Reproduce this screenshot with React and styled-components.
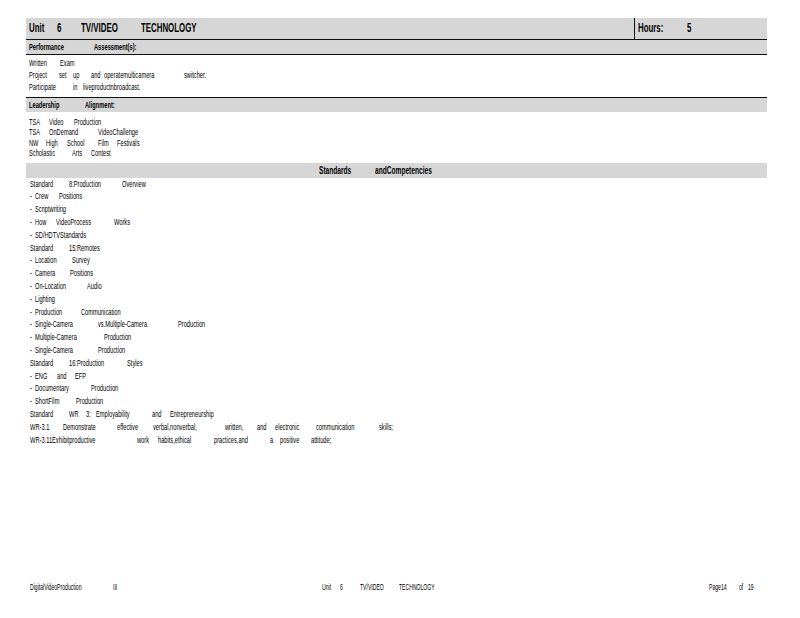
import React from "react";
import styled, { createGlobalStyle } from "styled-components";

const Global = createGlobalStyle`
  html, body { margin: 0; padding: 0; background: #fff; }
  body { font-family: "Liberation Sans", Arial, sans-serif; color: #000; }
`;

const Page = styled.div`
  width: 800px;
  height: 618px;
  box-sizing: border-box;
  padding: 18px 33px 25px 26px;
  display: flex;
  flex-direction: column;
  overflow: hidden;
`;

const Band = styled.div`
  display: flex;
  align-items: center;
  height: ${p => p.$h}px;
  background: #d6d6d6;
  border-bottom: ${p => (p.$rule ? "1.4px solid #111" : "none")};
  box-sizing: content-box;
`;

const UnitCell = styled.div`
  flex: 1;
  align-self: stretch;
  display: flex;
  align-items: center;
`;

const HoursCell = styled.div`
  width: 132px;
  align-self: stretch;
  border-left: 1.4px solid #111;
  display: flex;
  align-items: center;
`;

const TextBlock = styled.div`
  padding-top: ${p => p.$top}px;
  padding-bottom: ${p => p.$bottom}px;
  border-bottom: ${p => (p.$rule ? "1.4px solid #111" : "none")};
`;

const Row = styled.div`
  display: flex;
  height: ${p => p.$lh || 12}px;
  line-height: ${p => p.$lh || 12}px;
  padding-left: ${p => p.$left}px;
  font-size: ${p => p.$size || 9.5}px;
  font-weight: ${p => (p.$bold ? 700 : 400)};
`;

const Word = styled.span`
  flex: none;
  display: inline-block;
  white-space: nowrap;
  transform: scaleX(${p => p.$squeeze || 0.6});
  transform-origin: left center;
`;

const Footer = styled.div`
  margin-top: auto;
`;

// each word is [x on the page, text]; slot widths come from the next word's x
const Words = ({ items, from = 26, squeeze, ...rest }) => (
  <Row $left={items[0][0] - from} {...rest}>
    {items.map(([x, text], i) => (
      <Word
        key={i}
        $squeeze={squeeze}
        style={i < items.length - 1 ? { width: items[i + 1][0] - x } : undefined}
      >
        {text}
      </Word>
    ))}
  </Row>
);

const performance = [
  [[29, "Written"], [60, "Exam"]],
  [[29, "Project"], [59, "set"], [73, "up"], [91, "and"], [104, "operatemulticamera"], [184, "switcher."]],
  [[29, "Participate"], [73, "in"], [83, "liveproductnbroadcast."]],
];

const leadership = [
  [[29, "TSA"], [49, "Video"], [74, "Production"]],
  [[29, "TSA"], [49, "OnDemand"], [98, "VideoChallenge"]],
  [[29, "NW"], [46, "High"], [67, "School"], [98, "Film"], [117, "Festivals"]],
  [[29, "Scholastic"], [72, "Arts"], [91, "Contest"]],
];

const standards = [
  [[30, "Standard"], [69, "8:Production"], [122, "Overview"]],
  [[30, "-"], [35, "Crew"], [59, "Positions"]],
  [[30, "-"], [35, "Scriptwriting"]],
  [[30, "-"], [35, "How"], [56, "VideoProcess"], [114, "Works"]],
  [[30, "-"], [35, "SD/HDTVStandards"]],
  [[30, "Standard"], [69, "15:Remotes"]],
  [[30, "-"], [35, "Location"], [72, "Survey"]],
  [[30, "-"], [35, "Camera"], [70, "Positions"]],
  [[30, "-"], [35, "On-Location"], [87, "Audio"]],
  [[30, "-"], [35, "Lighting"]],
  [[30, "-"], [35, "Production"], [81, "Communication"]],
  [[30, "-"], [35, "Single-Camera"], [98, "vs.Multiple-Camera"], [178, "Production"]],
  [[30, "-"], [35, "Multiple-Camera"], [104, "Production"]],
  [[30, "-"], [35, "Single-Camera"], [98, "Production"]],
  [[30, "Standard"], [69, "16:Production"], [127, "Styles"]],
  [[30, "-"], [35, "ENG"], [57, "and"], [75, "EFP"]],
  [[30, "-"], [35, "Documentary"], [91, "Production"]],
  [[30, "-"], [35, "ShortFilm"], [76, "Production"]],
  [[30, "Standard"], [69, "WR"], [86, "3:"], [96, "Employability"], [152, "and"], [170, "Entrepreneurship"]],
  [[30, "WR-3.1"], [63, "Demonstrate"], [117, "effective"], [153, "verbal,nonverbal,"], [225, "written,"], [257, "and"], [275, "electronic"], [316, "communication"], [379, "skills;"]],
  [[30, "WR-3.11Exhibitproductive"], [137, "work"], [158, "habits,ethical"], [214, "practices,and"], [270, "a"], [280, "positive"], [311, "attitude;"]],
];

const footer = [
  [30, "DigitalVideoProduction"], [113, "III"], [322, "Unit"], [340, "6"], [360, "TV/VIDEO"],
  [399, "TECHNOLOGY"], [709, "Page14"], [739, "of"], [748, "19"],
];

export default function App() {
  return (
    <Page>
      <Global />
      <Band $h={21} $rule>
        <UnitCell>
          <Words
            $bold
            $size={12.5}
            $lh={21}
            squeeze={0.63}
            items={[[29, "Unit"], [57, "6"], [81, "TV/VIDEO"], [141, "TECHNOLOGY"]]}
          />
        </UnitCell>
        <HoursCell>
          <Words
            $bold
            $size={12.5}
            $lh={21}
            from={635}
            squeeze={0.63}
            items={[[638, "Hours:"], [687, "5"]]}
          />
        </HoursCell>
      </Band>
      <Band $h={13.5} $rule>
        <Words $bold items={[[29, "Performance"], [94, "Assessment(s):"]]} />
      </Band>
      <TextBlock $top={2} $bottom={4} $rule>
        {performance.map((items, i) => (
          <Words key={i} items={items} />
        ))}
      </TextBlock>
      <Band $h={14.5}>
        <Words $bold items={[[29, "Leadership"], [85, "Alignment:"]]} />
      </Band>
      <TextBlock $top={5} $bottom={4}>
        {leadership.map((items, i) => (
          <Words key={i} $lh={10.4} items={items} />
        ))}
      </TextBlock>
      <Band $h={15}>
        <Words $bold $size={11} items={[[319, "Standards"], [375, "andCompetencies"]]} />
      </Band>
      <TextBlock $top={0} $bottom={0}>
        {standards.map((items, i) => (
          <Words key={i} $lh={12.8} items={items} />
        ))}
      </TextBlock>
      <Footer>
        <Words $size={8.5} $lh={12} items={footer} />
      </Footer>
    </Page>
  );
}
